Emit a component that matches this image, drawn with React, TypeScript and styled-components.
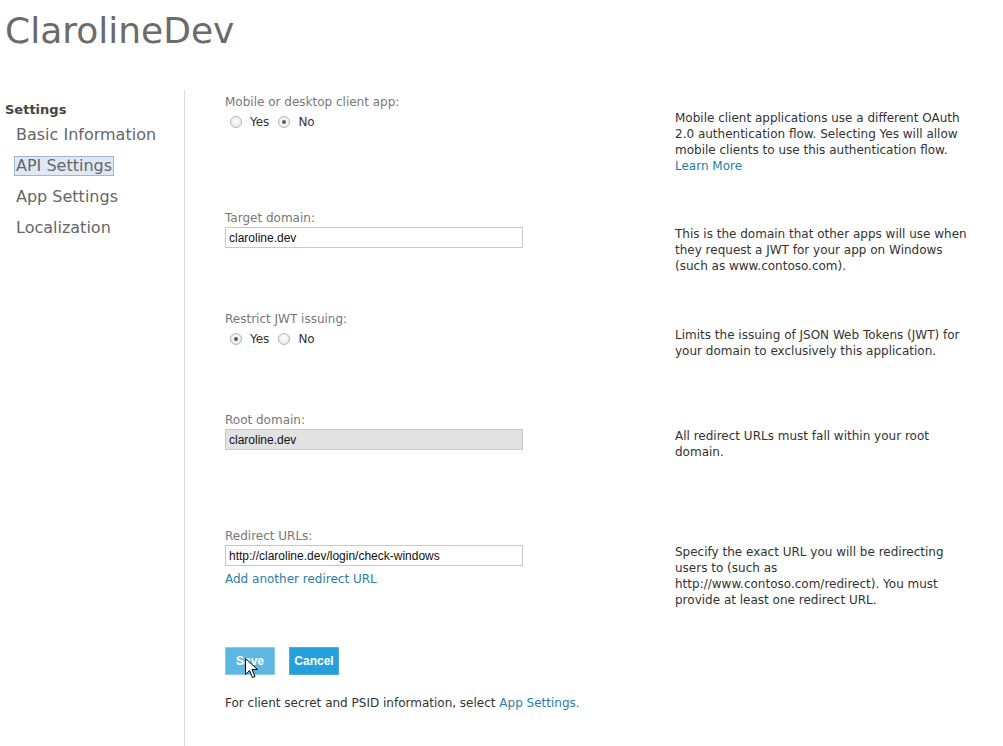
import React from "react";
import styled, { createGlobalStyle } from "styled-components";

const Global = createGlobalStyle`
  html, body { margin: 0; padding: 0; background: #fff; }
  body { font-family: "DejaVu Sans", Verdana, sans-serif; color: #333; }
  * { box-sizing: border-box; }
`;

const Page = styled.div`
  width: 1003px;
  height: 746px;
  overflow: hidden;
  display: flex;
  flex-direction: column;
`;

const Title = styled.h1`
  margin: 0;
  padding: 9px 0 0 5px;
  height: 90px;
  font-size: 36px;
  font-weight: normal;
  line-height: 44px;
  color: #6b6b6b;
`;

const Main = styled.div`
  display: flex;
  flex: 1;
`;

const Sidebar = styled.nav`
  width: 185px;
  border-right: 1px solid #dcdcdc;
  padding-top: 12px;
`;

const SideHeading = styled.div`
  font-size: 13px;
  font-weight: bold;
  line-height: 16px;
  color: #444;
  padding-left: 5px;
  margin-bottom: 1px;
`;

const NavItem = styled.div`
  height: 31px;
  display: flex;
  align-items: center;
  padding-left: 14px;
`;

const NavLabel = styled.span<{ $active?: boolean }>`
  font-size: 16px;
  line-height: 18px;
  color: #666;
  padding: 0 1px;
  border: 1px solid ${(p) => (p.$active ? "#9fb7d6" : "transparent")};
  background: ${(p) => (p.$active ? "#dfe9f6" : "transparent")};
`;

const Content = styled.div`
  flex: 1;
  padding: 4px 0 0 40px;
  position: relative;
`;

const Section = styled.div<{ $height: number }>`
  display: grid;
  grid-template-columns: 450px 298px;
  height: ${(p) => p.$height}px;
`;

const Field = styled.div`
  display: flex;
  flex-direction: column;
  align-items: flex-start;
`;

const Label = styled.div`
  font-size: 12px;
  line-height: 16px;
  color: #777;
`;

const Help = styled.div`
  margin-top: 16px;
  font-size: 12px;
  line-height: 16px;
  color: #333;
`;

const Link = styled.a`
  color: #2a7ea5;
  text-decoration: none;
  cursor: pointer;
`;

const RadioRow = styled.div`
  display: flex;
  align-items: center;
  margin-top: 4px;
  height: 16px;
  padding-left: 5px;
`;

const Radio = styled.span<{ $checked?: boolean }>`
  width: 12px;
  height: 12px;
  border-radius: 50%;
  border: 1px solid #b4b4b4;
  background: radial-gradient(circle at 50% 40%, #fdfdfd 0%, #e6e6e6 100%);
  display: inline-flex;
  align-items: center;
  justify-content: center;
  &::after {
    content: "";
    width: 4px;
    height: 4px;
    border-radius: 50%;
    background: ${(p) => (p.$checked ? "#5a5a5a" : "transparent")};
  }
`;

const RadioText = styled.span`
  font-size: 12px;
  line-height: 16px;
  color: #333;
  margin: 0 9px 0 8px;
`;

const Input = styled.input<{ $disabled?: boolean }>`
  margin-top: 1px;
  width: 298px;
  height: 21px;
  border: 1px solid #c8c8c8;
  padding: 0 3px;
  font-family: "Liberation Sans", Arial, sans-serif;
  font-size: 12px;
  color: #111;
  background: ${(p) => (p.$disabled ? "#e2e2e2" : "#fff")};
  outline: none;
`;

const FieldLink = styled(Link)`
  font-size: 12px;
  line-height: 16px;
  margin-top: 5px;
`;

const Buttons = styled.div`
  display: flex;
  gap: 14px;
  position: relative;
`;

const Button = styled.button<{ $hover?: boolean }>`
  width: 50px;
  height: 28px;
  border: 1px solid ${(p) => (p.$hover ? "#8ccbec" : "#4aaee0")};
  background: ${(p) => (p.$hover ? "#5db7e3" : "#25a0da")};
  color: #fff;
  font-family: "Liberation Sans", Arial, sans-serif;
  font-weight: bold;
  font-size: 12px;
  padding: 0;
  cursor: pointer;
`;

const Cursor = styled.svg`
  position: absolute;
  left: 20px;
  top: 11px;
  pointer-events: none;
`;

const Footer = styled.div`
  margin-top: 20px;
  font-size: 12px;
  line-height: 16px;
  color: #333;
`;

export default function App() {
  return (
    <Page>
      <Global />
      <Title>ClarolineDev</Title>
      <Main>
        <Sidebar>
          <SideHeading>Settings</SideHeading>
          <NavItem><NavLabel>Basic Information</NavLabel></NavItem>
          <NavItem><NavLabel $active>API Settings</NavLabel></NavItem>
          <NavItem><NavLabel>App Settings</NavLabel></NavItem>
          <NavItem><NavLabel>Localization</NavLabel></NavItem>
        </Sidebar>
        <Content>
          <Section $height={116}>
            <Field>
              <Label>Mobile or desktop client app:</Label>
              <RadioRow>
                <Radio />
                <RadioText>Yes</RadioText>
                <Radio $checked />
                <RadioText>No</RadioText>
              </RadioRow>
            </Field>
            <Help>
              Mobile client applications use a different OAuth 2.0 authentication flow. Selecting Yes will allow mobile clients to use this authentication flow.
              <br />
              <Link>Learn More</Link>
            </Help>
          </Section>
          <Section $height={101}>
            <Field>
              <Label>Target domain:</Label>
              <Input defaultValue="claroline.dev" />
            </Field>
            <Help>
              This is the domain that other apps will use when they request a JWT for your app on Windows (such as www.contoso.com).
            </Help>
          </Section>
          <Section $height={101}>
            <Field>
              <Label>Restrict JWT issuing:</Label>
              <RadioRow>
                <Radio $checked />
                <RadioText>Yes</RadioText>
                <Radio />
                <RadioText>No</RadioText>
              </RadioRow>
            </Field>
            <Help>
              Limits the issuing of JSON Web Tokens (JWT) for your domain to exclusively this application.
            </Help>
          </Section>
          <Section $height={116}>
            <Field>
              <Label>Root domain:</Label>
              <Input $disabled readOnly defaultValue="claroline.dev" />
            </Field>
            <Help>All redirect URLs must fall within your root domain.</Help>
          </Section>
          <Section $height={119}>
            <Field>
              <Label>Redirect URLs:</Label>
              <Input defaultValue="http://claroline.dev/login/check-windows" />
              <FieldLink>Add another redirect URL</FieldLink>
            </Field>
            <Help>
              Specify the exact URL you will be redirecting users to (such as http://www.contoso.com/redirect). You must provide at least one redirect URL.
            </Help>
          </Section>
          <Buttons>
            <Button $hover>Save</Button>
            <Button>Cancel</Button>
            <Cursor width="13" height="21" viewBox="0 0 13 21">
              <path d="M0.5 0.5 L0.5 16.5 L4.5 12.5 L7.5 19.5 L10 18.5 L7 11.5 L12.5 11.5 Z" fill="#fff" stroke="#000" strokeWidth="1" strokeLinejoin="miter" />
            </Cursor>
          </Buttons>
          <Footer>
            For client secret and PSID information, select <Link>App Settings.</Link>
          </Footer>
        </Content>
      </Main>
    </Page>
  );
}
